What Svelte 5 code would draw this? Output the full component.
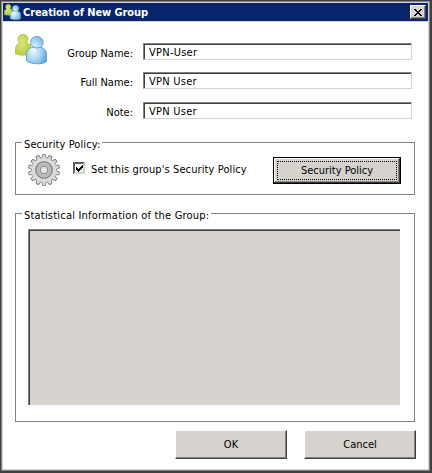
<script>
  let groupName = $state('VPN-User');
  let fullName = $state('VPN User');
  let note = $state('VPN User');
  let usePolicy = $state(true);
</script>

{#snippet people(size)}
  <svg width={size} height={size} viewBox="0 0 32 32" aria-hidden="true">
    <defs>
      <radialGradient id="blue{size}" cx=".35" cy=".5" r=".75">
        <stop offset="0" stop-color="#f0faff" />
        <stop offset=".5" stop-color="#a9d5f2" />
        <stop offset="1" stop-color="#4d9ed6" />
      </radialGradient>
      <radialGradient id="green{size}" cx=".4" cy=".4" r=".7">
        <stop offset="0" stop-color="#dce67e" />
        <stop offset="1" stop-color="#b3c93d" />
      </radialGradient>
    </defs>
    <path
      d="M8 .5C5 .5 3 2.500 3 5c0 1.800.8 3.200 2.200 4.200C2 9.800.5 12 .5 15.500v4.300c4 1.800 10 1.800 15 .3V11c-1-1.200-2.500-1.700-4.500-2C12.300 8 13 6.700 13 5 13 2.500 11 .5 8 .5z"
      fill="url(#green{size})" stroke="#a7bd3b" stroke-width=".8"
    />
    <path
      d="M21.800 2.500c-3.600 0-6.200 2.500-6.200 5.700 0 2 1 3.700 2.500 4.800-4.900 1-6.600 3.700-6.600 8.600v5.200c3 3.300 16.500 4.400 20.200.5v-5.200c0-5-1.700-7.500-6.100-9 1.600-1.200 2.500-2.900 2.500-4.900 0-3.200-2.700-5.700-6.300-5.700z"
      fill="url(#blue{size})" stroke="#5b9ecb" stroke-width=".9"
    />
    <path d="M18 13.100q4 2 8 0" fill="none" stroke="#5ba5d8" stroke-width="1" />
  </svg>
{/snippet}

<div class="window">
  <header>
    {@render people(17)}
    <h1>Creation of New Group</h1>
    <button class="close" aria-label="Close">
      <svg width="8" height="7" viewBox="0 0 8 7" shape-rendering="crispEdges">
        <path d="M0 0h2v1h1v1h2V1h1V0h2v1H7v1H6v1H5v1h1v1h1v1h1v1H6V6H5V5H3v1H2v1H0V6h1V5h1V4h1V3H2V2H1V1H0z" />
      </svg>
    </button>
  </header>
  <main>
    <section class="details">
      <div class="badge">{@render people(32)}</div>
      <div class="fields">
        <label><span>Group Name:</span><input bind:value={groupName} /></label>
        <label><span>Full Name:</span><input bind:value={fullName} /></label>
        <label><span>Note:</span><input bind:value={note} /></label>
      </div>
    </section>

    <section class="frame policy">
      <h2 class="t-policy">Security Policy:</h2>
      <svg class="gear" width="32" height="32" viewBox="-16 -16 32 32" aria-hidden="true">
        <g fill="#dcdcdc" stroke="#858585" stroke-width="1">
          {#each Array(14) as _, i}
            <path d="M-2.400-11L-1.300-15.500H1.300L2.400-11" transform="rotate({(i * 360) / 14})" />
          {/each}
          <circle r="12" stroke="none" />
        </g>
        <circle r="8.200" fill="#c9c9c9" stroke="#8b8b8b" stroke-width="1.600" />
        <circle r="5.800" fill="none" stroke="#b8b8b8" stroke-width="2" />
        <circle r="3.800" fill="#e5e5e5" stroke="#858585" stroke-width="1" />
      </svg>
      <label class="check">
        <input type="checkbox" bind:checked={usePolicy} />
        <span class="box">
          {#if usePolicy}
            <svg width="7" height="7" viewBox="0 0 7 7" shape-rendering="crispEdges">
              <path d="M0 2h1v1h1v1h1V3h1V2h1V1h1V0h1v3H6v1H5v1H4v1H3v1H2V6H1V5H0z" />
            </svg>
          {/if}
        </span>
        <span class="t-check">Set this group's Security Policy</span>
      </label>
      <button class="btn focus"><span>Security Policy</span></button>
    </section>

    <section class="frame stats">
      <h2 class="t-stats">Statistical Information of the Group:</h2>
      <div class="list"></div>
    </section>

    <footer>
      <button class="btn">OK</button>
      <button class="btn">Cancel</button>
    </footer>
  </main>
</div>

<style>
  :global(body) {
    margin: 0;
  }
  .window,
  .window * {
    box-sizing: border-box;
  }
  .window {
    width: 432px;
    height: 473px;
    border: solid #404040;
    border-width: 1px 2px 2px 1px;
    box-shadow: inset 0 0 0 1px #848284, inset 0 0 0 2px #d6d3ce;
    padding: 2px;
    background: #fff;
    color: #000;
    font: 11px/14px 'DejaVu Sans Condensed', 'DejaVu Sans', sans-serif;
    white-space: nowrap;
  }
  svg {
    display: block;
    flex: none;
  }
  h1,
  h2 {
    margin: 0;
    font: inherit;
  }
  header {
    display: flex;
    height: 19px;
    padding: 0 2px 0 1px;
    background: #08246b;
    border-bottom: 1px solid #d6d3ce;
  }
  header > svg {
    margin-top: 1px;
  }
  h1 {
    flex: 1;
    margin-left: 2px;
    color: #fff;
    font-weight: bold;
    line-height: 20px;
    letter-spacing: -0.1px;
  }
  .close {
    display: flex;
    width: 16px;
    height: 14px;
    margin-top: 2px;
    padding: 3px 0 0 3px;
    border: 1px solid;
    border-color: #fff #404040 #404040 #fff;
    box-shadow: inset -1px -1px #848284;
    background: #d6d3ce;
  }
  main {
    display: flex;
    flex-direction: column;
    padding: 0 13px 0 12px;
  }
  .details {
    display: flex;
    height: 120px;
  }
  .badge {
    width: 32px;
    padding-top: 12px;
  }
  .fields {
    display: grid;
    flex: 1;
    grid-template-rows: 29px 30px 17px;
    align-content: start;
    padding-top: 21px;
  }
  .fields label {
    display: flex;
  }
  .fields span {
    width: 86px;
    margin-right: 10px;
    padding-top: 4px;
    text-align: right;
  }
  .fields input {
    width: 269px;
    height: 17px;
    padding: 1px 5px 0;
    border: 1px solid;
    border-color: #848284 #d6d3ce #d6d3ce #848284;
    box-shadow: inset 1px 1px #404040;
    outline: none;
    background: #fff;
    color: inherit;
    font: inherit;
    letter-spacing: 0.25px;
  }
  .frame {
    width: 400px;
    border: 1px solid #848284;
  }
  h2 {
    width: max-content;
    height: 14px;
    margin: -6px 0 0 6px;
    padding: 0 2px;
    background: #fff;
    line-height: 16px;
  }
  .t-policy,
  .t-check {
    letter-spacing: 0.1px;
  }
  .t-stats {
    letter-spacing: 0.2px;
  }
  .policy {
    display: grid;
    grid-template-columns: 57px 200px 128px;
    height: 53px;
    align-content: start;
  }
  .policy h2 {
    grid-column: 1 / -1;
  }
  .gear {
    margin: 3px 0 0 12px;
  }
  .check {
    display: flex;
    align-items: flex-start;
    padding-top: 10px;
  }
  .check input {
    position: absolute;
    opacity: 0;
  }
  .t-check {
    padding-top: 2px;
  }
  .box {
    width: 12px;
    height: 12px;
    margin: 1px 6px 0 0;
    padding: 1px 0 0 1px;
    border: 2px solid;
    border-color: #606060 #d6d3ce #d6d3ce #606060;
  }
  .btn {
    width: 112px;
    height: 29px;
    padding: 0;
    border: 1px solid;
    border-color: #fff #404040 #404040 #fff;
    box-shadow: inset -1px -1px #848284;
    background: #d6d3ce;
    color: #000;
    font: inherit;
  }
  .btn.focus {
    width: 128px;
    height: 27px;
    margin-top: 6px;
    padding: 2px;
    border: 1px solid #000;
    box-shadow: inset -1px -1px #404040, inset 1px 1px #fff, inset -2px -2px #848284;
  }
  .focus span {
    display: block;
    width: 120px;
    height: 19px;
    margin-left: 1px;
    border: 1px dotted #000;
    line-height: 17px;
  }
  .stats {
    height: 209px;
    margin-top: 18px;
  }
  .list {
    width: 372px;
    height: 176px;
    margin: 7px 0 0 12px;
    border: solid #848284;
    border-width: 1px 0 0 1px;
    box-shadow: inset 1px 1px #404040;
    background: #d6d3ce;
  }
  footer {
    display: flex;
    justify-content: flex-end;
    gap: 17px;
    margin-top: 8px;
    margin-right: -1px;
  }
</style>
